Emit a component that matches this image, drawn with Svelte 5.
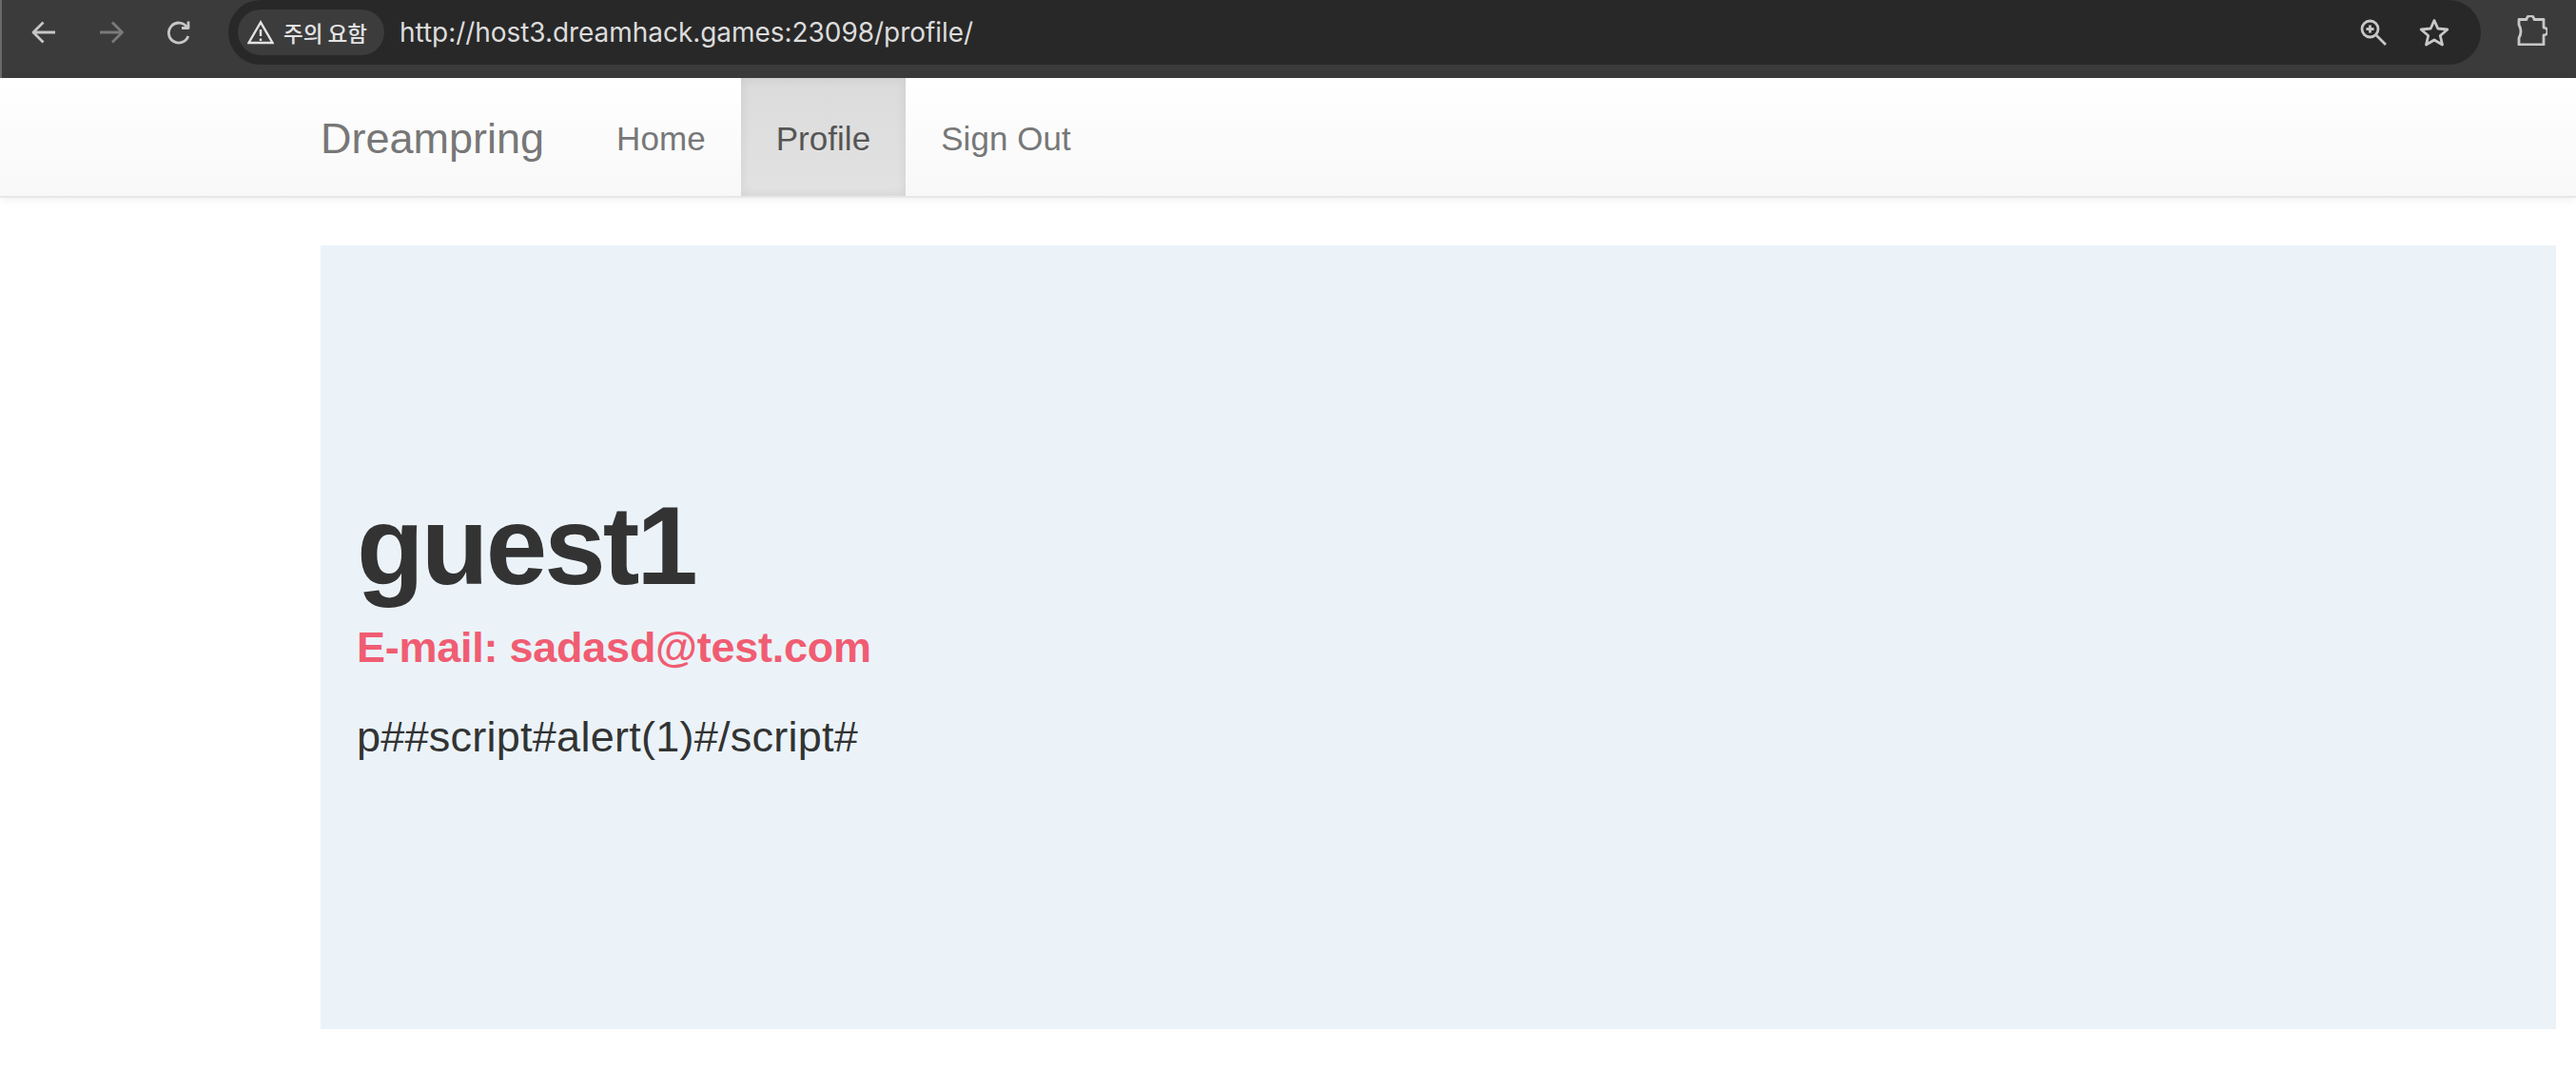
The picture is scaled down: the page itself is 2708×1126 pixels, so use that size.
<script>
  const links = [
    { label: 'Home', active: false },
    { label: 'Profile', active: true },
    { label: 'Sign Out', active: false }
  ]
</script>

<div class="browser">
  <div class="toolbar">
    <div class="nav-btns">
      <svg class="ic" viewBox="0 0 28 28"><path d="M26 14H3M13.500 3.500 3 14l10.500 10.500" /></svg>
      <svg class="ic dim" viewBox="0 0 28 28"><path d="M1 14h23M14 3.500 24.500 14 14 24.500" /></svg>
      <svg class="ic" viewBox="0 0 28 28"><path d="M21.800 18a10.500 10.500 0 1 1-1.300-9.500M22 2.500V9.500H15" /></svg>
    </div>
    <div class="omnibox">
      <div class="badge">
        <svg class="warn" viewBox="0 0 28 26"><path d="M14 2.500 1.500 24h25zM14 10v7M14 19.500v2.500" /></svg>
        <span>주의 요함</span>
      </div>
      <span class="url">http://host3.dreamhack.games:23098/profile/</span>
      <div class="omni-icons">
        <svg class="ic zoom" viewBox="0 0 28 28"><circle cx="10.500" cy="10.500" r="8.500" /><path d="M17 17l10 10M6.500 10.500h8M10.500 6.500v8" /></svg>
        <svg class="ic star" viewBox="0 0 32 32"><path d="M16 3.500l3.800 8.500 10 1-7.500 6.500 2.200 9.500-8.500-5-8.500 5 2.200-9.500L2.200 13l10-1z" /></svg>
      </div>
    </div>
    <svg class="ic ext" viewBox="0 0 32 32"><path d="M2 4.500h8a4 4 0 0 1 8 0h10V13a4 4 0 0 1 0 8v10H2v-7q4-7 0-14z" /></svg>
  </div>

  <nav class="navbar">
    <a class="brand" href="#top">Dreampring</a>
    <ul>
      {#each links as l}
        <li class:active={l.active}><a href="#top">{l.label}</a></li>
      {/each}
    </ul>
  </nav>

  <main>
    <section class="jumbotron">
      <h1>guest1</h1>
      <h3>E-mail: sadasd@test.com</h3>
      <p>p##script#alert(1)#/script#</p>
    </section>
  </main>
</div>

<style>
  :global(body) {
    margin: 0;
    background: #fff;
  }
  .browser {
    height: 1126px;
    overflow: hidden;
    font-family: "Liberation Sans", Arial, sans-serif;
  }

  /* browser chrome */
  .toolbar {
    height: 82px;
    box-sizing: border-box;
    background: #3b3b3b;
    border-left: 2px solid #6a6a6a;
    display: flex;
    align-items: flex-start;
  }
  .nav-btns {
    display: flex;
    gap: 44px;
    padding: 20px 0 0 30px;
    width: 208px;
    box-sizing: border-box;
  }
  .ic {
    width: 28px;
    height: 28px;
    fill: none;
    stroke: #c7c7c7;
    stroke-width: 2.800;
    stroke-linejoin: round;
    flex-shrink: 0;
  }
  .dim { stroke: #7a7a7a; }
  .omnibox {
    width: 2368px;
    height: 68px;
    margin-left: 30px;
    background: #282828;
    border-radius: 34px;
    display: flex;
    align-items: center;
    padding-left: 10px;
    box-sizing: border-box;
  }
  .badge {
    height: 48px;
    width: 154px;
    box-sizing: border-box;
    background: #3c3c3c;
    border-radius: 24px;
    display: flex;
    align-items: center;
    gap: 10px;
    padding-left: 10px;
    color: #e3e3e3;
    font: 500 22.500px "Noto Sans CJK KR", sans-serif;
  }
  .warn {
    width: 28px;
    height: 26px;
    fill: none;
    stroke: #e3e3e3;
    stroke-width: 2.400;
  }
  .url {
    margin-left: 16px;
    color: #dcdcdc;
    font-size: 28px;
    letter-spacing: -0.050px;
    font-family: Inter, sans-serif;
  }
  .omni-icons {
    margin-left: auto;
    margin-right: 33px;
    display: flex;
    align-items: center;
    gap: 34px;
  }
  .star { width: 32px; height: 32px; }
  .ext {
    width: 32px;
    height: 32px;
    margin: 16px 0 0 38px;
  }

  /* site navbar */
  .navbar {
    height: 126px;
    box-sizing: border-box;
    padding-left: 337px;
    display: flex;
    background: linear-gradient(to bottom, #fff 0%, #f8f8f8 100%);
    border-bottom: 2px solid #e7e7e7;
    box-shadow: 0 2px 10px rgba(0, 0, 0, 0.06);
  }
  .brand {
    font-size: 45px;
    line-height: 127px;
    color: #777;
    text-decoration: none;
    margin-right: 39px;
    text-shadow: 0 1px 0 rgba(255, 255, 255, 0.25);
  }
  ul {
    display: flex;
    list-style: none;
    margin: 0;
    padding: 0;
  }
  li a {
    display: block;
    height: 124px;
    padding: 0 37px;
    font-size: 35px;
    line-height: 127px;
    letter-spacing: 0.050px;
    color: #777;
    text-decoration: none;
    text-shadow: 0 1px 0 rgba(255, 255, 255, 0.25);
  }
  li.active a {
    color: #555;
    background: linear-gradient(to bottom, #dbdbdb 0%, #e2e2e2 100%);
    box-shadow: inset 0 0 12px rgba(0, 0, 0, 0.08);
  }

  /* content */
  main {
    padding: 50px 21px 0 337px;
  }
  .jumbotron {
    height: 824px;
    box-sizing: border-box;
    background: #ebf3f9;
    padding: 252px 38px 0;
  }
  h1 {
    margin: 0;
    font-size: 116px;
    line-height: 128px;
    font-weight: 700;
    letter-spacing: -3px;
    color: #333;
  }
  h3 {
    margin: 18px 0 0;
    font-size: 45px;
    line-height: 50px;
    font-weight: 700;
    letter-spacing: -0.250px;
    color: #f05d72;
  }
  p {
    margin: 44px 0 0;
    font-size: 45px;
    line-height: 50px;
    letter-spacing: 0.250px;
    color: #333;
  }
</style>
